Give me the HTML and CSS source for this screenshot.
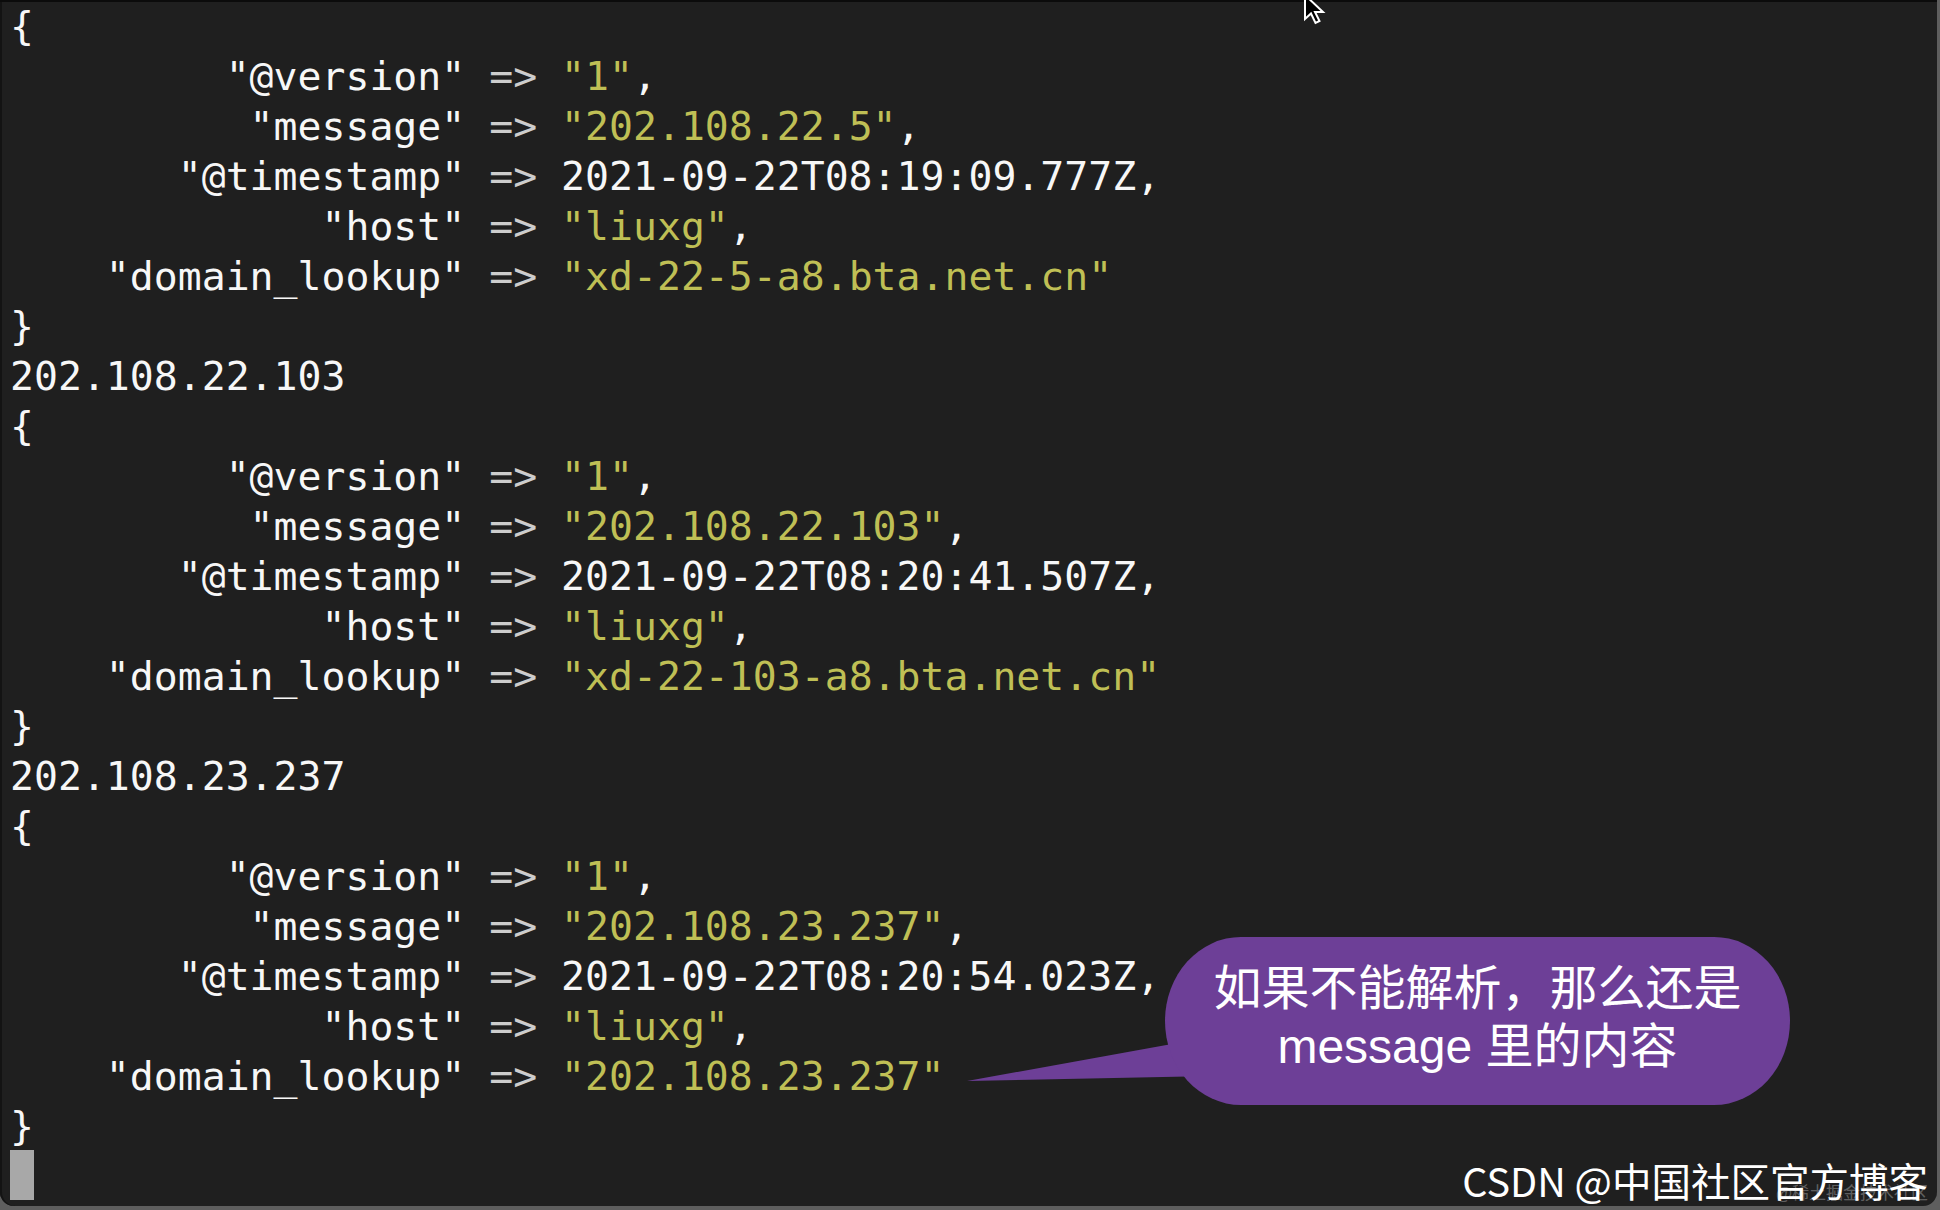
FILE: index.html
```html
<!DOCTYPE html>
<html lang="zh-CN">
<head>
<meta charset="utf-8">
<title>Terminal</title>
<link rel="stylesheet" href="styles.css">
</head>
<body>
<div class="window">
  <div class="term">
<div class="line">{</div>
<div class="line"><span class="k">         "@version"</span> <span class="op">=&gt;</span> <span class="s">"1"</span>,</div>
<div class="line"><span class="k">          "message"</span> <span class="op">=&gt;</span> <span class="s">"202.108.22.5"</span>,</div>
<div class="line"><span class="k">       "@timestamp"</span> <span class="op">=&gt;</span> 2021-09-22T08:19:09.777Z,</div>
<div class="line"><span class="k">             "host"</span> <span class="op">=&gt;</span> <span class="s">"liuxg"</span>,</div>
<div class="line"><span class="k">    "domain_lookup"</span> <span class="op">=&gt;</span> <span class="s">"xd-22-5-a8.bta.net.cn"</span></div>
<div class="line">}</div>
<div class="line">202.108.22.103</div>
<div class="line">{</div>
<div class="line"><span class="k">         "@version"</span> <span class="op">=&gt;</span> <span class="s">"1"</span>,</div>
<div class="line"><span class="k">          "message"</span> <span class="op">=&gt;</span> <span class="s">"202.108.22.103"</span>,</div>
<div class="line"><span class="k">       "@timestamp"</span> <span class="op">=&gt;</span> 2021-09-22T08:20:41.507Z,</div>
<div class="line"><span class="k">             "host"</span> <span class="op">=&gt;</span> <span class="s">"liuxg"</span>,</div>
<div class="line"><span class="k">    "domain_lookup"</span> <span class="op">=&gt;</span> <span class="s">"xd-22-103-a8.bta.net.cn"</span></div>
<div class="line">}</div>
<div class="line">202.108.23.237</div>
<div class="line">{</div>
<div class="line"><span class="k">         "@version"</span> <span class="op">=&gt;</span> <span class="s">"1"</span>,</div>
<div class="line"><span class="k">          "message"</span> <span class="op">=&gt;</span> <span class="s">"202.108.23.237"</span>,</div>
<div class="line"><span class="k">       "@timestamp"</span> <span class="op">=&gt;</span> 2021-09-22T08:20:54.023Z,</div>
<div class="line"><span class="k">             "host"</span> <span class="op">=&gt;</span> <span class="s">"liuxg"</span>,</div>
<div class="line"><span class="k">    "domain_lookup"</span> <span class="op">=&gt;</span> <span class="s">"202.108.23.237"</span></div>
<div class="line">}</div>
<div class="line"><span class="cursor"></span></div>
  </div>

  <svg class="tail" width="1940" height="1210" viewBox="0 0 1940 1210" aria-hidden="true">
    <polygon points="1205,1038 967,1081 1212,1076" fill="#6d3f97"/>
  </svg>
  <div class="bubble">
    <div class="bubble-line">如果不能解析，那么还是</div>
    <div class="bubble-line">message 里的内容</div>
  </div>

  <div class="mark-faint">@稀土掘金技术社区</div>
  <div class="mark">CSDN @中国社区官方博客</div>

  <svg class="pointer" width="30" height="40" viewBox="0 0 30 40" aria-hidden="true">
    <polygon points="3,1 3,25 9,19.5 13.5,29 17.5,27 13,18 21,18" fill="#000" stroke="#fff" stroke-width="2" stroke-linejoin="miter"/>
  </svg>
</div>
</body>
</html>
```

FILE: styles.css
```css
html, body {
  margin: 0;
  padding: 0;
  background: #5e5e5e;
}

.window {
  position: relative;
  width: 1937px;
  height: 1206px;
  background: #1f1f1f;
  border-radius: 0 0 14px 14px;
  box-shadow: inset 0 2px 0 #0b0b0b, inset 2px 0 0 #131313;
  overflow: hidden;
}

.term {
  padding: 1px 0 0 10px;
  font-family: "DejaVu Sans Mono", "Liberation Mono", monospace;
  font-size: 39.8px;
  line-height: 50px;
  color: #f7f7f7;
}

.line {
  height: 50px;
  white-space: pre;
}

.k { color: #f7f7f7; }
.op { color: #cdcdcd; }
.s { color: #bfbf55; }

.cursor {
  display: inline-block;
  width: 24px;
  height: 50px;
  background: #a8a8a8;
  vertical-align: top;
  margin-top: -1px;
}

.tail {
  position: absolute;
  left: 0;
  top: 0;
  pointer-events: none;
}

.bubble {
  position: absolute;
  left: 1165px;
  top: 937px;
  width: 625px;
  height: 168px;
  box-sizing: border-box;
  padding-top: 23px;
  background: #6d3f97;
  border-radius: 76px / 84px;
  color: #ffffff;
  font-family: "Liberation Sans", "Noto Sans CJK SC", sans-serif;
  font-size: 48px;
  line-height: 58px;
  text-align: center;
}

.bubble-line {
  white-space: nowrap;
}

.mark {
  position: absolute;
  right: 9px;
  top: 1160px;
  font-family: "Noto Sans CJK SC", sans-serif;
  font-size: 39.5px;
  line-height: 40px;
  color: #ffffff;
  white-space: nowrap;
}

.mark-faint {
  position: absolute;
  right: 9px;
  top: 1182px;
  font-family: "Noto Sans CJK SC", sans-serif;
  font-size: 17px;
  line-height: 20px;
  color: rgba(255, 255, 255, 0.3);
  white-space: nowrap;
}

.pointer {
  position: absolute;
  left: 1302px;
  top: -6px;
}
```
